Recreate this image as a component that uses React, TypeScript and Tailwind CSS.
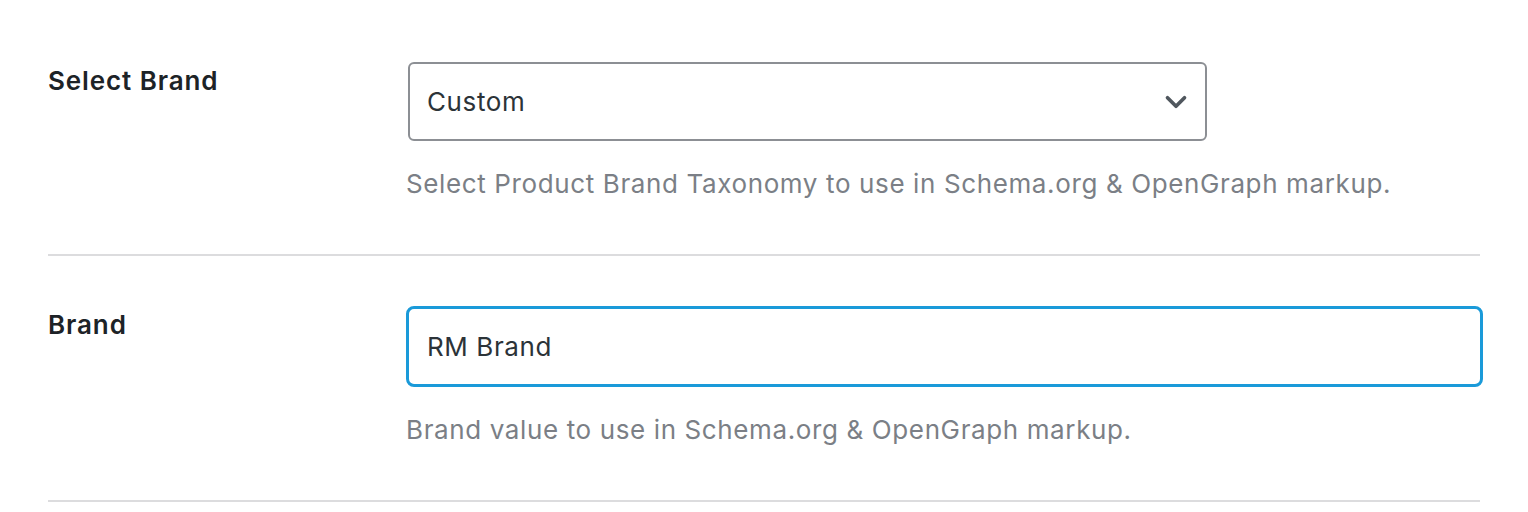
import { ChevronDown } from 'lucide-react';

interface FieldRowProps {
  label: string;
  description: string;
  children: React.ReactNode;
  topPad: string;
}

function FieldRow({ label, description, children, topPad }: FieldRowProps) {
  return (
    <div className={`flex border-b-2 border-[#dcdcde] pb-[52px] ${topPad}`}>
      <div className="w-[358px] shrink-0 pt-[1px] text-[26px] leading-[36px] font-semibold tracking-[0.9px] text-[#1d2327]">
        {label}
      </div>
      <div className="flex-1 min-w-0">
        {children}
        <p className="mt-[25px] text-[26px] leading-[36px] tracking-[0.62px] text-[#7b7f86]">{description}</p>
      </div>
    </div>
  );
}

export default function App() {
  return (
    <div
      className="min-h-[512px] w-[1528px] bg-white px-[48px]"
      style={{ fontFamily: 'Inter, "Noto Sans", sans-serif' }}
    >
      <FieldRow
        label="Select Brand"
        description="Select Product Brand Taxonomy to use in Schema.org & OpenGraph markup."
        topPad="pt-[62px]"
      >
        <div className="ml-[2px] flex h-[79px] w-[799px] items-center justify-between rounded-[6px] border-2 border-[#8c8f94] pl-[17px] pr-[12px]">
          <span className="text-[26px] tracking-[0.6px] text-[#2c3338]">Custom</span>
          <ChevronDown className="h-[34px] w-[34px] text-[#50575e]" strokeWidth={2.6} />
        </div>
      </FieldRow>
      <FieldRow
        label="Brand"
        description="Brand value to use in Schema.org & OpenGraph markup."
        topPad="pt-[50px]"
      >
        <div className="-mr-[3px] flex h-[81px] items-center rounded-[8px] border-[3px] border-[#1a9ad9] pl-[18px]">
          <span className="text-[26px] tracking-[0.6px] text-[#2c3338]">RM Brand</span>
        </div>
      </FieldRow>
    </div>
  );
}
